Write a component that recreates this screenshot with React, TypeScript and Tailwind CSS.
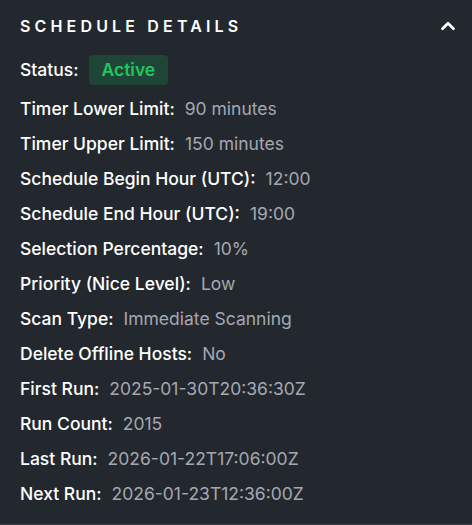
import { ChevronUp } from 'lucide-react';

const rows: [string, string][] = [
  ['Timer Lower Limit:', '90 minutes'],
  ['Timer Upper Limit:', '150 minutes'],
  ['Schedule Begin Hour (UTC):', '12:00'],
  ['Schedule End Hour (UTC):', '19:00'],
  ['Selection Percentage:', '10%'],
  ['Priority (Nice Level):', 'Low'],
  ['Scan Type:', 'Immediate Scanning'],
  ['Delete Offline Hosts:', 'No'],
  ['First Run:', '2025-01-30T20:36:30Z'],
  ['Run Count:', '2015'],
  ['Last Run:', '2026-01-22T17:06:00Z'],
  ['Next Run:', '2026-01-23T12:36:00Z'],
];

export default function App() {
  return (
    <div className="w-[472px] h-[525px] bg-[#23282f] border-b border-[#3b4048] font-['Inter',sans-serif] overflow-hidden">
      {/* Header */}
      <div className="flex items-center justify-between pl-5 pr-[13px] pt-[15px] pb-[18px]">
        <h2 className="text-[16px] leading-[22px] font-semibold tracking-[0.26em] text-white uppercase">
          Schedule Details
        </h2>
        <ChevronUp size={22} strokeWidth={3} className="text-white" />
      </div>

      {/* Details */}
      <div className="px-5 flex flex-col gap-[11px]">
        <div className="flex items-center gap-[10px] mb-[1px]">
          <span className="text-[17.5px] font-medium text-white">Status:</span>
          <span className="h-[30px] px-[13px] flex items-center rounded bg-[#1f4537] text-[#22c55e] text-[17.5px] font-semibold">
            Active
          </span>
        </div>
        {rows.map(([label, value]) => (
          <div key={label} className="flex items-center gap-[10px] h-6">
            <span className="text-[17.5px] font-medium text-white">{label}</span>
            <span className="text-[17.5px] text-[#a3a8b0]">{value}</span>
          </div>
        ))}
      </div>
    </div>
  );
}
